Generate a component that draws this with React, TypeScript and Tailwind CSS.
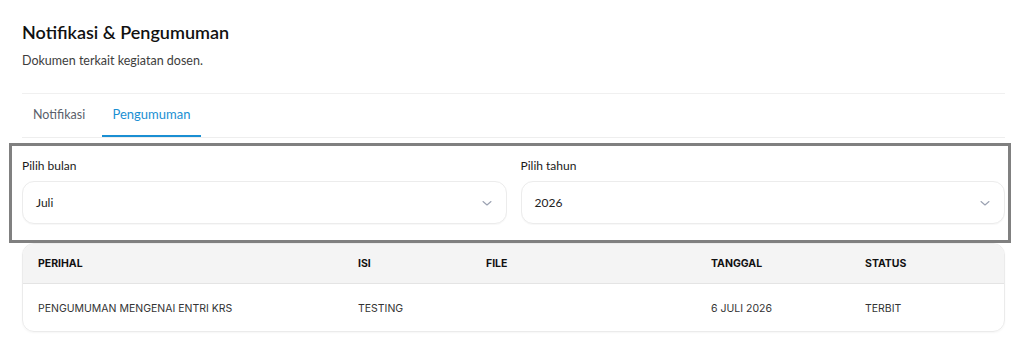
import React from "react";

function Chevron() {
  return (
    <svg width="12" height="12" viewBox="0 0 12 12" fill="none" className="text-[#9aa1b1]">
      <path d="M2 4.5 L6 8 L10 4.5" stroke="currentColor" strokeWidth="1.1" strokeLinecap="round" strokeLinejoin="round" />
    </svg>
  );
}

function Select({ label, value }: { label: string; value: string }) {
  return (
    <div className="flex flex-col">
      <div className="h-[16px] leading-[16px] text-[12px] text-[#1a1a1a]">{label}</div>
      <div className="mt-[7px] h-[43px] rounded-[12px] border border-[#ececec] bg-white shadow-[0_1px_1px_rgba(0,0,0,0.03)] flex items-center justify-between pl-[13px] pr-[13px]">
        <span className="text-[12px] text-[#222]">{value}</span>
        <Chevron />
      </div>
    </div>
  );
}

export default function App() {
  const font = { fontFamily: "Lato, 'Noto Sans', sans-serif" };
  const tfont = { fontFamily: "Inter, 'Noto Sans', sans-serif" };
  return (
    <div className="w-[1019px] h-[358px] bg-white px-[22px] pr-[14px] pt-[18px]" style={font}>
      <div className="text-[18px] leading-[28px] text-[#111] font-semibold">Notifikasi &amp; Pengumuman</div>
      <div className="mt-[6px] text-[12.5px] leading-[18px] text-[#3d3d3d]">Dokumen terkait kegiatan dosen.</div>
      <div className="mt-[23px] border-t border-[#f0f0f0]" />
      <div className="flex border-b border-[#eeeeee] h-[44px]">
        <div className="h-full w-[80px] flex items-center pl-[11px] text-[12.5px] text-[#5a5f6b]">Notifikasi</div>
        <div className="h-full w-[99px] flex items-center justify-center text-[13px] text-[#1a8fd3] border-b-2 border-[#1a8fd3] -mb-px">Pengumuman</div>
      </div>
      <div className="mt-[5px] ml-[-13px] mr-[-6px] border-[3px] border-[#808080] pl-[10px] pr-[3px] pt-[12px] pb-[16px] grid grid-cols-2 gap-[14px]">
        <Select label="Pilih bulan" value="Juli" />
        <Select label="Pilih tahun" value="2026" />
      </div>
      <div className="rounded-[12px] border border-[#ebebeb] overflow-hidden shadow-[0_1px_2px_rgba(0,0,0,0.04)]" style={tfont}>
        <div className="grid grid-cols-[320px_128px_225px_154px_1fr] h-[40px] items-center bg-[#f4f4f4] border-b border-[#e4e4e4] text-[10.5px] font-bold text-[#111]">
          <div className="px-[15px]">PERIHAL</div>
          <div className="px-[15px]">ISI</div>
          <div className="px-[15px]">FILE</div>
          <div className="px-[15px]">TANGGAL</div>
          <div className="px-[15px]">STATUS</div>
        </div>
        <div className="grid grid-cols-[320px_128px_225px_154px_1fr] h-[47px] pt-[3px] items-center text-[10.5px] text-[#333]">
          <div className="px-[15px]">PENGUMUMAN MENGENAI ENTRI KRS</div>
          <div className="px-[15px]">TESTING</div>
          <div className="px-[15px]"></div>
          <div className="px-[15px]">6 JULI 2026</div>
          <div className="px-[15px]">TERBIT</div>
        </div>
      </div>
    </div>
  );
}
